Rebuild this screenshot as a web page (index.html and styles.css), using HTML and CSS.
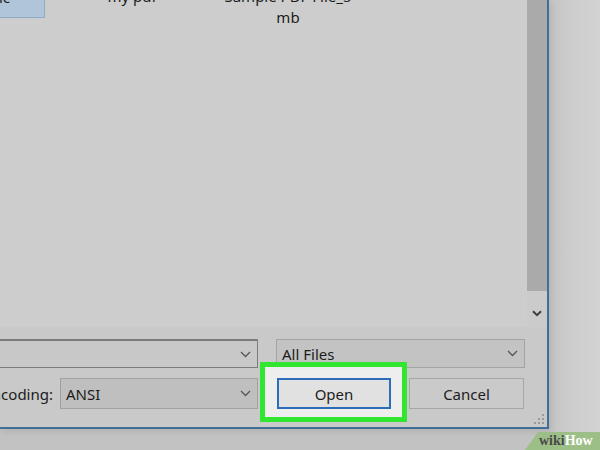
FILE: index.html
```html
<!DOCTYPE html>
<html>
<head>
<meta charset="utf-8">
<link rel="stylesheet" href="styles.css">
</head>
<body>
<div class="page">
  <div class="dialog">
    <div class="browser">
      <div class="list">
        <div class="items">
          <div class="item selected"><span>Academic</span></div>
          <div class="item"><span>my pdf</span></div>
          <div class="item"><span>Sample PDF File_5<br>mb</span></div>
        </div>
      </div>
      <div class="scroll">
        <div class="track"></div>
        <div class="arrow">
          <svg width="10" height="7" viewBox="0 0 10 7"><path d="M1 1.2 L5 5.2 L9 1.2" fill="none" stroke="#3e3e3e" stroke-width="2"/></svg>
        </div>
      </div>
    </div>
    <div class="controls">
      <div class="combo filename">
        <span class="val"></span>
        <svg class="chev" width="11" height="7" viewBox="0 0 11 7"><path d="M1 1 L5.5 5.5 L10 1" fill="none" stroke="#555" stroke-width="1.3"/></svg>
      </div>
      <div class="combo filter">
        <span class="val">All Files</span>
        <svg class="chev" width="11" height="7" viewBox="0 0 11 7"><path d="M1 1 L5.5 5.5 L10 1" fill="none" stroke="#555" stroke-width="1.3"/></svg>
      </div>
      <div class="enc-row">
        <div class="label"><span>Encoding:</span></div>
        <div class="combo enc">
          <span class="val">ANSI</span>
          <svg class="chev" width="11" height="7" viewBox="0 0 11 7"><path d="M1 1 L5.5 5.5 L10 1" fill="none" stroke="#555" stroke-width="1.3"/></svg>
        </div>
      </div>
      <div class="buttons">
        <div class="highlight"></div>
        <div class="btn open">Open</div>
        <div class="btn cancel">Cancel</div>
      </div>
    </div>
    <div class="footer">
      <svg class="grip" width="11" height="11" viewBox="0 0 11 11">
        <rect x="8" y="0" width="2" height="2" fill="#9a9a9a"/>
        <rect x="4" y="4" width="2" height="2" fill="#9a9a9a"/>
        <rect x="8" y="4" width="2" height="2" fill="#9a9a9a"/>
        <rect x="0" y="8" width="2" height="2" fill="#9a9a9a"/>
        <rect x="4" y="8" width="2" height="2" fill="#9a9a9a"/>
        <rect x="8" y="8" width="2" height="2" fill="#9a9a9a"/>
      </svg>
    </div>
  </div>
  <div class="wikihow"><span class="wiki">wiki</span><span class="how">How</span></div>
</div>
</body>
</html>
```
FILE: styles.css
```css
html, body {
  margin: 0;
  padding: 0;
}
body {
  width: 600px;
  height: 450px;
  overflow: hidden;
  font-family: "Noto Sans", "Open Sans", sans-serif;
  font-size: 15px;
  color: #1c1c1c;
}
.page {
  position: relative;
  width: 600px;
  height: 450px;
  background: linear-gradient(to right, #c2c2c2 549px, #cbcbcb 565px, #d3d3d3 600px);
  overflow: hidden;
}
.dialog {
  width: 549px;
  height: 429px;
  box-sizing: border-box;
  border-right: 2px solid #3f6f98;
  border-bottom: 2px solid #3f6f98;
  background: #c9c9c9;
  display: flex;
  flex-direction: column;
  box-shadow: 2px 3px 6px rgba(0,0,0,0.08);
}
.browser {
  display: flex;
  height: 327px;
}
.list {
  flex: 1;
  background: #cdcdcd;
  overflow: hidden;
}
.items {
  display: flex;
  align-items: flex-start;
  gap: 18px;
  margin-left: -93px;
  margin-top: -14px;
}
.item {
  width: 138px;
  flex: none;
  text-align: center;
  line-height: 21px;
  padding-bottom: 9px;
  box-sizing: border-box;
}
.item.selected {
  background: #b1c5d8;
  border: 1px solid #8cabc7;
}
.scroll {
  width: 20px;
  display: flex;
  flex-direction: column;
}
.track {
  flex: 1;
  background: #aaaaaa;
}
.arrow {
  height: 36px;
  background: #cbcbcb;
  display: flex;
  align-items: flex-start;
  justify-content: center;
  padding-top: 19px;
  box-sizing: border-box;
}
.controls {
  display: grid;
  grid-template-columns: 258px 249px;
  grid-template-rows: 29px 31px;
  column-gap: 18px;
  row-gap: 10px;
  padding-top: 12px;
}
.combo {
  display: flex;
  align-items: center;
  box-sizing: border-box;
  padding: 0 6px 0 5px;
}
.combo .val {
  flex: 1;
}
.filename {
  background: #c8c8c8;
  border: 1px solid #7c7c7c;
  border-left: none;
  border-top-width: 2px;
}
.filter {
  background: #c3c3c3;
  border: 1px solid #a4a4a4;
}
.enc-row {
  display: flex;
  gap: 7px;
}
.label {
  width: 53px;
  overflow: hidden;
  display: flex;
  justify-content: flex-end;
  align-items: center;
  white-space: nowrap;
}
.enc {
  flex: 1;
  background: #bfbfbf;
  border: 1px solid #a1a1a1;
}
.buttons {
  position: relative;
  display: flex;
  gap: 18px;
  padding-left: 1px;
}
.highlight {
  position: absolute;
  left: -16px;
  top: -16px;
  width: 147px;
  height: 60px;
  box-sizing: border-box;
  border: 5px solid #31e531;
  background: #eeeeee;
}
.btn {
  position: relative;
  display: flex;
  align-items: center;
  justify-content: center;
  box-sizing: border-box;
  height: 31px;
}
.open {
  width: 114px;
  background: #e1e1e1;
  border: 2px solid #2c6cb9;
}
.cancel {
  width: 115px;
  background: #cacaca;
  border: 1px solid #a7a7a7;
}
.footer {
  flex: 1;
  display: flex;
  justify-content: flex-end;
  align-items: flex-end;
  padding: 0 2px 2px 0;
}
.wikihow {
  position: absolute;
  right: 0;
  bottom: 0;
  width: 75px;
  height: 18px;
  background: #9cbf87;
  clip-path: polygon(13px 0, 100% 0, 100% 100%, 0 100%);
  font-family: "Liberation Serif", "DejaVu Serif", serif;
  font-weight: bold;
  font-size: 14px;
  line-height: 18px;
  padding-left: 14px;
  box-sizing: border-box;
  white-space: nowrap;
}
.wiki {
  color: #4a4a4a;
}
.how {
  color: #ffffff;
}
```
